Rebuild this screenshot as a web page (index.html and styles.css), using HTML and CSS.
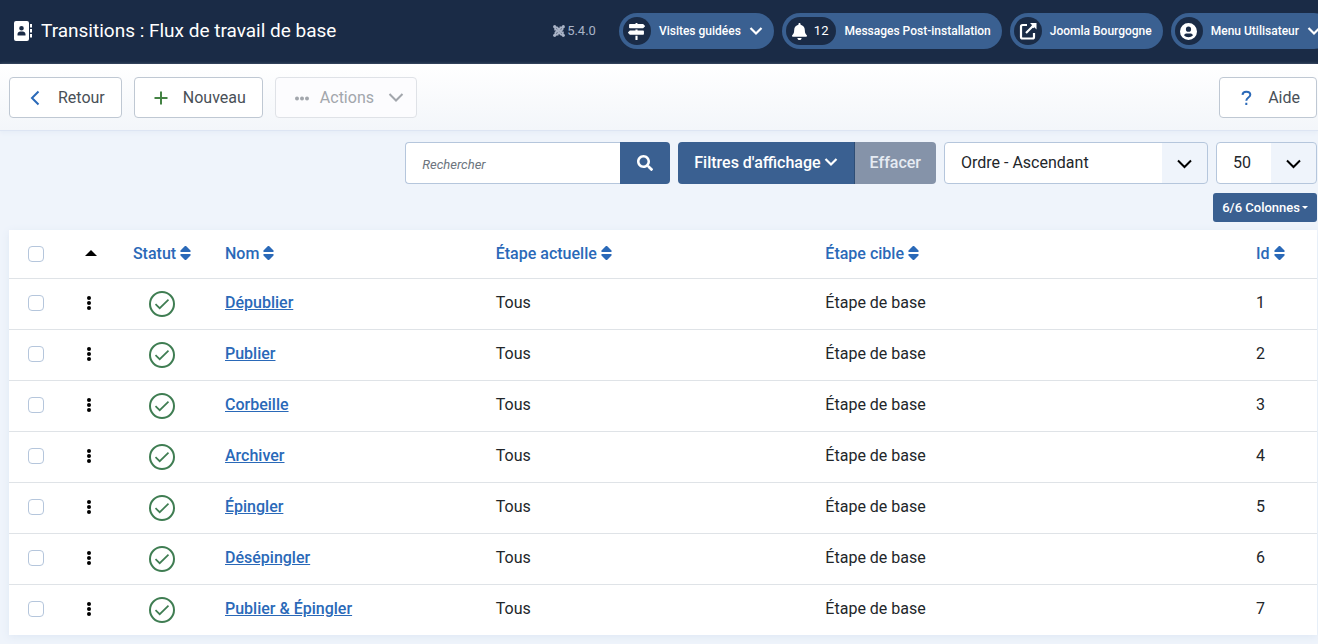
FILE: index.html
```html
<!DOCTYPE html>
<html lang="fr">
<head>
    <meta charset="UTF-8">
    <meta name="viewport" content="width=device-width, initial-scale=1.0">
    <title>Transitions : Flux de travail de base</title>
    <link rel="stylesheet" href="styles.css">
</head>
<body>
    <!-- Shared icons -->
    <svg class="sprite" aria-hidden="true">
        <symbol id="i-chevron" viewBox="0 0 14 10"><path d="M1.500 2 7 7.500 12.500 2" fill="none" stroke="currentColor" stroke-width="2.200"/></symbol>
        <symbol id="i-sort" viewBox="0 0 11 16"><path d="M5.500 1c.3 0 .6.100.8.300L10.500 5.600c.4.500.2 1.400-.6 1.400H1.100C.3 7 .1 6.100.5 5.600L4.700 1.300c.2-.2.5-.3.800-.3zM5.500 15c.3 0 .6-.1.800-.3l4.200-4.300c.4-.5.2-1.400-.6-1.400H1.100c-.8 0-1 .9-.6 1.400l4.200 4.300c.2.200.5.300.8.300z" fill="currentColor"/></symbol>
        <symbol id="i-dots" viewBox="0 0 4 14"><circle cx="2" cy="2" r="2"/><circle cx="2" cy="7" r="2"/><circle cx="2" cy="12" r="2"/></symbol>
        <symbol id="i-check" viewBox="0 0 26 26"><circle cx="13" cy="13" r="12" fill="none" stroke="currentColor" stroke-width="2"/><path d="M6.500 13.200l4.200 4L19.500 8.700" fill="none" stroke="currentColor" stroke-width="1.700"/></symbol>
    </svg>

    <header class="header">
        <h1 class="page-title">
            <svg width="20" height="20" viewBox="0 0 20 20" fill="currentColor" aria-hidden="true">
                <path fill-rule="evenodd" d="M3 0h11a2 2 0 0 1 2 2v16a2 2 0 0 1-2 2H3a2 2 0 0 1-2-2V2a2 2 0 0 1 2-2zM8.500 5a2.300 2.300 0 1 0 0 4.600 2.300 2.300 0 0 0 0-4.600zM4.500 14.500h8v-1.300c0-1.500-1.500-2.600-2.600-2.600H7.100c-1.100 0-2.600 1.100-2.600 2.600z"/>
                <path d="M17 3h2v3.500h-2zM17 8h2v3.500h-2zM17 13h2v3.500h-2z"/>
            </svg>
            Transitions : Flux de travail de base
        </h1>
        <div class="header-items">
            <div class="version">
                <svg width="12" height="12" viewBox="0 0 12 12" fill="none" stroke="currentColor" stroke-width="1.900" aria-hidden="true">
                    <path d="M2.200 5.500V4q0-2 2-1.500L9 7.500M6.500 2.400H8q2 0 1.500 2L4.500 9M9.800 6.500V8q0 2-2 1.500L3 4.500M5.500 9.600H4q-2 0-1.500-2L7.500 3"/>
                    <g fill="currentColor" stroke="none"><circle cx="1.700" cy="1.700" r="1.600"/><circle cx="10.300" cy="1.700" r="1.600"/><circle cx="1.700" cy="10.300" r="1.600"/><circle cx="10.300" cy="10.300" r="1.600"/></g>
                </svg>
                5.4.0
            </div>
            <button type="button" class="pill">
                <span class="pill-icon">
                    <svg width="17" height="17" viewBox="0 0 512 512" fill="currentColor" aria-hidden="true"><path d="M507.310 84.690L464 41.370c-6-6-14.140-9.370-22.630-9.370H288V16c0-8.840-7.160-16-16-16h-32c-8.840 0-16 7.160-16 16v16H56c-13.250 0-24 10.750-24 24v80c0 13.250 10.750 24 24 24h385.370c8.490 0 16.620-3.370 22.630-9.370l43.310-43.310c6.250-6.260 6.250-16.380 0-22.630zM224 496c0 8.840 7.160 16 16 16h32c8.840 0 16-7.160 16-16V384h-64v112zm232-272H288v-32h-64v32H70.630c-8.490 0-16.620 3.370-22.630 9.370L4.690 276.690c-6.250 6.250-6.250 16.380 0 22.630L48 342.630c6 6 14.140 9.370 22.630 9.370H456c13.250 0 24-10.750 24-24v-80c0-13.250-10.750-24-24-24z"/></svg>
                </span>
                Visites guidées
                <svg class="pill-chevron" width="14" height="10" aria-hidden="true"><use href="#i-chevron"/></svg>
            </button>
            <a href="#messages" class="pill">
                <span class="pill-icon pill-count">
                    <svg width="15" height="17" viewBox="0 0 448 512" fill="currentColor" aria-hidden="true"><path d="M224 512c35.320 0 63.970-28.650 63.970-64H160.030c0 35.350 28.650 64 63.970 64zm215.390-149.710c-19.320-20.760-55.470-51.990-55.470-154.290 0-77.700-54.480-139.900-127.940-155.160V32c0-17.670-14.320-32-31.980-32s-31.980 14.330-31.980 32v20.840C118.560 68.100 64.080 130.300 64.080 208c0 102.300-36.150 133.530-55.470 154.290-6 6.450-8.660 14.160-8.610 21.710.11 16.400 12.980 32 32.100 32h383.800c19.120 0 32-15.600 32.100-32 .05-7.550-2.610-15.270-8.610-21.710z"/></svg>
                    12
                </span>
                Messages Post-installation
            </a>
            <a href="#site" class="pill">
                <span class="pill-icon">
                    <svg width="18" height="18" viewBox="0 0 18 18" fill="none" stroke="currentColor" stroke-width="2.200" aria-hidden="true"><path d="M8 3H3.500A1.500 1.500 0 0 0 2 4.500V15a1.500 1.500 0 0 0 1.500 1.500h10A1.500 1.500 0 0 0 15 15v-4M7 11 14 4"/><path d="M11 1h6.500v6.500l-2.200-2.200-1 1-2.100-2.100 1-1z" fill="currentColor" stroke="none"/></svg>
                </span>
                Joomla Bourgogne
            </a>
            <button type="button" class="pill">
                <span class="pill-icon">
                    <svg width="17" height="17" viewBox="0 0 17 17" fill="currentColor" aria-hidden="true"><path fill-rule="evenodd" d="M8.500 0a8.500 8.500 0 1 0 0 17 8.500 8.500 0 0 0 0-17zM8.500 3.600a2.600 2.600 0 1 1 0 5.200 2.600 2.600 0 0 1 0-5.200zM4 12.300c.5-1.300 1.600-1.900 2.700-1.900h3.600c1.100 0 2.200.6 2.700 1.900-1.100 1.300-2.700 2-4.500 2s-3.400-.7-4.500-2z"/></svg>
                </span>
                Menu Utilisateur
                <svg class="pill-chevron" width="14" height="10" aria-hidden="true"><use href="#i-chevron"/></svg>
            </button>
        </div>
    </header>

    <!-- Toolbar -->
    <div class="toolbar">
        <button type="button" class="tool-btn">
            <svg class="blue" width="20" height="16" viewBox="0 0 20 16" fill="none" stroke="currentColor" stroke-width="2" aria-hidden="true"><path d="M12.500 1.500 6 8l6.500 6.500"/></svg>
            Retour
        </button>
        <button type="button" class="tool-btn">
            <svg class="green" width="20" height="16" viewBox="0 0 20 16" fill="none" stroke="currentColor" stroke-width="2" aria-hidden="true"><path d="M3.500 8h13M10 1.500v13"/></svg>
            Nouveau
        </button>
        <button type="button" class="tool-btn tool-actions" disabled>
            <svg width="14" height="16" viewBox="0 0 14 16" fill="currentColor" aria-hidden="true"><circle cx="2" cy="8.500" r="2"/><circle cx="7" cy="8.500" r="2"/><circle cx="12" cy="8.500" r="2"/></svg>
            Actions
            <svg class="actions-chevron" width="16" height="11" viewBox="0 0 16 11" fill="none" stroke="currentColor" stroke-width="2" aria-hidden="true"><path d="M1.500 2 8 8.500 14.500 2"/></svg>
        </button>
        <button type="button" class="tool-btn tool-help">
            <svg class="blue" width="20" height="16" viewBox="0 0 20 16" fill="none" stroke="currentColor" stroke-width="2" aria-hidden="true"><path d="M6.500 4.800C6.700 2.600 8.300 1.800 10.300 1.800s4 1 4 3c0 2.800-4 2.700-4 6M10.300 12.800v2.200"/></svg>
            Aide
        </button>
    </div>

    <main class="content">
        <!-- Filters -->
        <form class="filters">
            <div class="group">
                <input type="text" class="search" placeholder="Rechercher" aria-label="Rechercher">
                <button type="button" class="btn btn-search" aria-label="Lancer la recherche">
                    <svg width="16" height="16" viewBox="0 0 512 512" fill="currentColor" aria-hidden="true"><path d="M505 442.700L405.300 343c-4.500-4.500-10.600-7-17-7H372c27.600-35.300 44-79.700 44-128C416 93.100 322.900 0 208 0S0 93.100 0 208s93.100 208 208 208c48.300 0 92.700-16.400 128-44v16.300c0 6.400 2.500 12.500 7 17l99.700 99.700c9.400 9.400 24.600 9.400 33.900 0l28.300-28.300c9.400-9.400 9.400-24.600.1-34zM208 336c-70.700 0-128-57.200-128-128 0-70.700 57.200-128 128-128 70.700 0 128 57.200 128 128 0 70.700-57.200 128-128 128z"/></svg>
                </button>
            </div>
            <div class="group">
                <button type="button" class="btn btn-filter">
                    Filtres d'affichage
                    <svg width="14" height="10" aria-hidden="true"><use href="#i-chevron"/></svg>
                </button>
                <button type="button" class="btn btn-clear" disabled>Effacer</button>
            </div>
            <select class="select select-order" aria-label="Trier par">
                <option>Ordre - Ascendant</option>
            </select>
            <select class="select select-limit" aria-label="Nombre de lignes">
                <option>50</option>
            </select>
        </form>
        <div class="columns-bar">
            <button type="button" class="btn btn-columns">6/6 Colonnes<span class="caret"></span></button>
        </div>

        <table class="list">
            <thead>
                <tr>
                    <th class="c-check"><input type="checkbox" aria-label="Tout cocher"></th>
                    <th class="c-order"><a href="#ordre" aria-label="Ordre"><span class="caret-up"></span></a></th>
                    <th class="c-status"><a href="#statut">Statut <svg width="11" height="16" aria-hidden="true"><use href="#i-sort"/></svg></a></th>
                    <th class="c-name"><a href="#nom">Nom <svg width="11" height="16" aria-hidden="true"><use href="#i-sort"/></svg></a></th>
                    <th class="c-from"><a href="#actuelle">Étape actuelle <svg width="11" height="16" aria-hidden="true"><use href="#i-sort"/></svg></a></th>
                    <th class="c-to"><a href="#cible">Étape cible <svg width="11" height="16" aria-hidden="true"><use href="#i-sort"/></svg></a></th>
                    <th class="c-id"><a href="#id">Id <svg width="11" height="16" aria-hidden="true"><use href="#i-sort"/></svg></a></th>
                </tr>
            </thead>
            <tbody>
                <tr>
                    <td class="c-check"><input type="checkbox" aria-label="Dépublier"></td>
                    <td class="c-order"><svg width="4" height="14" aria-hidden="true"><use href="#i-dots"/></svg></td>
                    <td class="c-status"><button type="button" class="state" aria-label="Activé"><svg width="26" height="26" aria-hidden="true"><use href="#i-check"/></svg></button></td>
                    <td><a href="#t1">Dépublier</a></td>
                    <td>Tous</td>
                    <td>Étape de base</td>
                    <td>1</td>
                </tr>
                <tr>
                    <td class="c-check"><input type="checkbox" aria-label="Publier"></td>
                    <td class="c-order"><svg width="4" height="14" aria-hidden="true"><use href="#i-dots"/></svg></td>
                    <td class="c-status"><button type="button" class="state" aria-label="Activé"><svg width="26" height="26" aria-hidden="true"><use href="#i-check"/></svg></button></td>
                    <td><a href="#t2">Publier</a></td>
                    <td>Tous</td>
                    <td>Étape de base</td>
                    <td>2</td>
                </tr>
                <tr>
                    <td class="c-check"><input type="checkbox" aria-label="Corbeille"></td>
                    <td class="c-order"><svg width="4" height="14" aria-hidden="true"><use href="#i-dots"/></svg></td>
                    <td class="c-status"><button type="button" class="state" aria-label="Activé"><svg width="26" height="26" aria-hidden="true"><use href="#i-check"/></svg></button></td>
                    <td><a href="#t3">Corbeille</a></td>
                    <td>Tous</td>
                    <td>Étape de base</td>
                    <td>3</td>
                </tr>
                <tr>
                    <td class="c-check"><input type="checkbox" aria-label="Archiver"></td>
                    <td class="c-order"><svg width="4" height="14" aria-hidden="true"><use href="#i-dots"/></svg></td>
                    <td class="c-status"><button type="button" class="state" aria-label="Activé"><svg width="26" height="26" aria-hidden="true"><use href="#i-check"/></svg></button></td>
                    <td><a href="#t4">Archiver</a></td>
                    <td>Tous</td>
                    <td>Étape de base</td>
                    <td>4</td>
                </tr>
                <tr>
                    <td class="c-check"><input type="checkbox" aria-label="Épingler"></td>
                    <td class="c-order"><svg width="4" height="14" aria-hidden="true"><use href="#i-dots"/></svg></td>
                    <td class="c-status"><button type="button" class="state" aria-label="Activé"><svg width="26" height="26" aria-hidden="true"><use href="#i-check"/></svg></button></td>
                    <td><a href="#t5">Épingler</a></td>
                    <td>Tous</td>
                    <td>Étape de base</td>
                    <td>5</td>
                </tr>
                <tr>
                    <td class="c-check"><input type="checkbox" aria-label="Désépingler"></td>
                    <td class="c-order"><svg width="4" height="14" aria-hidden="true"><use href="#i-dots"/></svg></td>
                    <td class="c-status"><button type="button" class="state" aria-label="Activé"><svg width="26" height="26" aria-hidden="true"><use href="#i-check"/></svg></button></td>
                    <td><a href="#t6">Désépingler</a></td>
                    <td>Tous</td>
                    <td>Étape de base</td>
                    <td>6</td>
                </tr>
                <tr>
                    <td class="c-check"><input type="checkbox" aria-label="Publier &amp; Épingler"></td>
                    <td class="c-order"><svg width="4" height="14" aria-hidden="true"><use href="#i-dots"/></svg></td>
                    <td class="c-status"><button type="button" class="state" aria-label="Activé"><svg width="26" height="26" aria-hidden="true"><use href="#i-check"/></svg></button></td>
                    <td><a href="#t7">Publier &amp; Épingler</a></td>
                    <td>Tous</td>
                    <td>Étape de base</td>
                    <td>7</td>
                </tr>
            </tbody>
        </table>
    </main>
</body>
</html>
```
FILE: styles.css
```css
* {
    box-sizing: border-box;
}
body {
    margin: 0;
    font-family: Roboto, "Liberation Sans", sans-serif;
    font-size: 16px;
    line-height: 24px;
    color: #22262a;
    background: #eff4fb;
}
button, input, select {
    font-family: inherit;
    font-size: 16px;
    margin: 0;
}
button {
    cursor: pointer;
}
.sprite {
    display: none;
}

/* Header */
.header {
    display: flex;
    align-items: center;
    justify-content: space-between;
    height: 64px;
    padding: 0 0 2px 13px;
    background: #1a2b46;
    color: #fff;
    overflow: hidden;
}
.page-title {
    display: flex;
    align-items: center;
    gap: 8px;
    margin: 0;
    font-size: 19px;
    font-weight: 400;
    white-space: nowrap;
}
.header-items {
    display: flex;
    align-items: center;
    gap: 8px;
    margin-right: -14px; /* last item runs off the edge */
}
.version {
    display: flex;
    align-items: center;
    gap: 2px;
    margin-right: 15px;
    font-size: 13px;
    color: #a9b3c6;
}
.pill {
    display: flex;
    align-items: center;
    height: 36px;
    padding: 0 11px 0 4px;
    border: 0;
    border-radius: 18px;
    background: #3a6091;
    color: #fff;
    font-size: 12px;
    font-weight: 500;
    text-decoration: none;
    white-space: nowrap;
}
.pill-icon {
    display: flex;
    align-items: center;
    justify-content: center;
    min-width: 28px;
    height: 28px;
    margin-right: 8px;
    border-radius: 14px;
    background: #1a2b46;
}
.pill-count {
    gap: 7px;
    padding: 0 8px 0 6px;
    font-size: 13px;
    font-weight: 400;
}
.pill-chevron {
    margin-left: 8px;
}

/* Toolbar */
.toolbar {
    display: flex;
    gap: 12px;
    padding: 13px 1px 12px 9px;
    border-bottom: 1px solid #dde5f3;
    background: linear-gradient(#fff, #f3f6fa);
    box-shadow: 0 2px 4px #e6edf7;
}
.tool-btn {
    display: flex;
    align-items: center;
    gap: 12px;
    height: 41px;
    padding: 0 16px;
    border: 1px solid #bfc8d3;
    border-radius: 4px;
    background: #fff;
    color: #495057;
}
.tool-btn:disabled {
    border-color: #dfe2e7;
    background: #fcfcfe;
    color: #a2a6ac;
    cursor: default;
}
.tool-actions {
    gap: 11px;
    padding: 0 12px 0 19px;
}
.actions-chevron {
    margin-left: 3px;
}
.tool-help {
    margin-left: auto;
}
.blue {
    color: #2a69b8;
}
.green {
    color: #448344;
}

/* Filters */
.content {
    padding: 11px 1px 9px 9px;
}
.filters {
    display: flex;
    justify-content: flex-end;
    gap: 8px;
    margin: 0;
}
.group {
    display: flex;
}
.search {
    width: 215px;
    height: 42px;
    padding: 0 16px;
    border: 1px solid #b5c6dc;
    border-right: 0;
    border-radius: 4px 0 0 4px;
    background: #fff;
}
.search::placeholder {
    font-size: 13px;
    font-style: italic;
    color: #6d757e;
}
.btn {
    display: flex;
    align-items: center;
    justify-content: center;
    height: 42px;
    padding-bottom: 2px;
    border: 0;
    background: #3a6091;
    color: #fff;
}
.btn-search {
    width: 50px;
    border-radius: 0 4px 4px 0;
}
.btn-filter {
    gap: 3px;
    padding: 0 16px 2px;
    border-right: 1px solid #2e4d75;
    border-radius: 4px 0 0 4px;
    font-weight: 500;
}
.btn-clear {
    padding: 0 15px 2px;
    border-radius: 0 4px 4px 0;
    background: #8593a9;
    color: #e6ebf3;
    font-weight: 500;
}
.select {
    height: 42px;
    padding: 0 46px 2px 16px;
    appearance: none;
    border: 1px solid #b5c6dc;
    border-radius: 4px;
    color: #22262a;
    background: url("data:image/svg+xml,%3Csvg xmlns='http://www.w3.org/2000/svg' width='45' height='40' viewBox='0 0 45 40'%3E%3Crect width='45' height='40' fill='%23eff4fb'/%3E%3Cpath d='M16 17.500l6.500 6.500 6.500-6.500' fill='none' stroke='%23000' stroke-width='2'/%3E%3C/svg%3E") right center no-repeat #fff;
}
.select-order {
    width: 264px;
}
.select-limit {
    width: 101px;
}
.columns-bar {
    display: flex;
    justify-content: flex-end;
    padding: 9px 0 8px;
}
.btn-columns {
    height: 29px;
    padding: 0 9px;
    border-radius: 3px;
    font-size: 13px;
    font-weight: 500;
}
.caret {
    margin-left: 2px;
    border: 3px solid transparent;
    border-top-color: #fff;
    border-bottom: 0;
}

/* List */
.list {
    width: 100%;
    table-layout: fixed;
    border-collapse: separate;
    border-spacing: 0;
    background: #fff;
    box-shadow: 0 2px 8px #dfe8f4;
}
.list th, .list td {
    height: 51px;
    padding: 12px 16px 0;
    border-bottom: 1px solid #dfe3e7;
    text-align: left;
    vertical-align: top;
    font-weight: 400;
}
.list th {
    height: 49px;
    font-weight: 500;
}
.list tr:last-child td {
    height: 50px;
    border-bottom: 0;
}
.list a {
    color: #2a69b8;
    font-weight: 500;
}
.list th a {
    text-decoration: none;
}
.list th svg {
    vertical-align: -2px;
}
.list td svg {
    vertical-align: -2px;
}
.list .c-check, .list .c-order, .list .c-status {
    padding-left: 0;
    padding-right: 0;
    text-align: center;
}
.list th.c-order {
    padding-left: 4px;
}
.c-check {
    width: 54px;
}
.c-order {
    width: 52px;
}
.c-status {
    width: 94px;
}
.c-name {
    width: 20.7%;
}
.c-from {
    width: 25.2%;
}
.c-id {
    width: 77px;
}
.list input {
    display: block;
    width: 16px;
    height: 16px;
    margin: 4px auto 0;
    appearance: none;
    border: 1px solid #b5c6dc;
    border-radius: 4px;
    background: #fff;
}
.caret-up {
    display: inline-block;
    border: 6px solid transparent;
    border-bottom-color: #000;
    border-top: 0;
    vertical-align: 3px;
}
.state {
    display: block;
    margin: 0 auto;
    padding: 0;
    border: 0;
    background: none;
    color: #3f7d52;
}
.state svg {
    display: block;
}
```
